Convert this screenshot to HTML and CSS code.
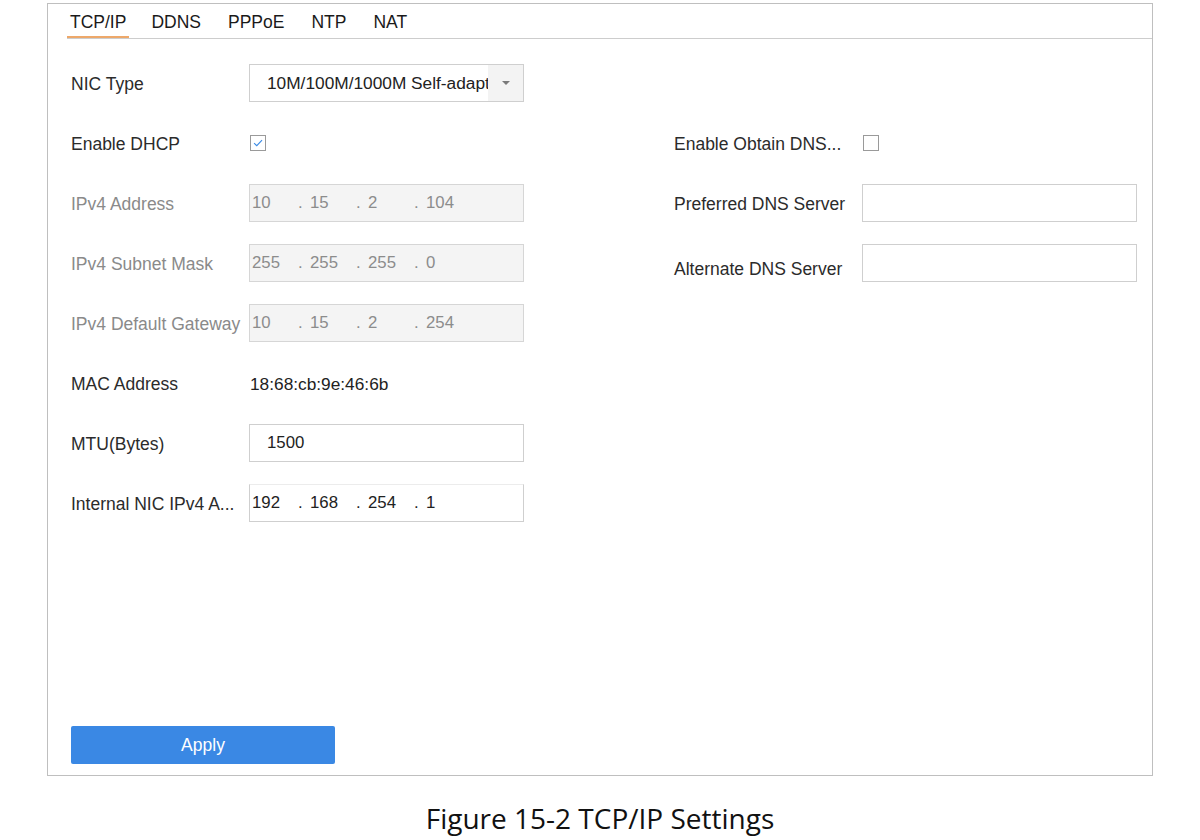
FILE: index.html
```html
<!DOCTYPE html>
<html lang="en">
<head>
<meta charset="utf-8">
<title>TCP/IP Settings</title>
<link rel="stylesheet" href="styles.css">
</head>
<body>
<div class="page">
  <div class="frame">
    <div class="tabs">
      <div class="tab active">TCP/IP</div>
      <div class="tab">DDNS</div>
      <div class="tab">PPPoE</div>
      <div class="tab">NTP</div>
      <div class="tab">NAT</div>
    </div>
    <div class="content">
      <div class="col col-left">
        <div class="row">
          <div class="label">NIC Type</div>
          <div class="select">
            <span class="select-text">10M/100M/1000M Self-adapt</span>
            <span class="select-arrow"><span class="tri"></span></span>
          </div>
        </div>
        <div class="row">
          <div class="label">Enable DHCP</div>
          <div class="checkbox checked">
            <svg viewBox="0 0 16 16" width="14" height="14"><path d="M3.5 8.2 L6.6 11 L12.6 4.6" fill="none" stroke="#3d8ce6" stroke-width="1.3"/></svg>
          </div>
        </div>
        <div class="row">
          <div class="label disabled">IPv4 Address</div>
          <div class="ip disabled">
            <span class="seg first">10</span>
            <span class="seg"><span class="dot">.</span>15</span>
            <span class="seg"><span class="dot">.</span>2</span>
            <span class="seg"><span class="dot">.</span>104</span>
          </div>
        </div>
        <div class="row">
          <div class="label disabled">IPv4 Subnet Mask</div>
          <div class="ip disabled">
            <span class="seg first">255</span>
            <span class="seg"><span class="dot">.</span>255</span>
            <span class="seg"><span class="dot">.</span>255</span>
            <span class="seg"><span class="dot">.</span>0</span>
          </div>
        </div>
        <div class="row">
          <div class="label disabled">IPv4 Default Gateway</div>
          <div class="ip disabled">
            <span class="seg first">10</span>
            <span class="seg"><span class="dot">.</span>15</span>
            <span class="seg"><span class="dot">.</span>2</span>
            <span class="seg"><span class="dot">.</span>254</span>
          </div>
        </div>
        <div class="row">
          <div class="label">MAC Address</div>
          <div class="value">18:68:cb:9e:46:6b</div>
        </div>
        <div class="row">
          <div class="label">MTU(Bytes)</div>
          <div class="input"><span class="input-text">1500</span></div>
        </div>
        <div class="row">
          <div class="label">Internal NIC IPv4 A...</div>
          <div class="ip plain">
            <span class="seg first">192</span>
            <span class="seg"><span class="dot">.</span>168</span>
            <span class="seg"><span class="dot">.</span>254</span>
            <span class="seg"><span class="dot">.</span>1</span>
          </div>
        </div>
      </div>
      <div class="col col-right">
        <div class="row">
          <div class="label label-right">Enable Obtain DNS...</div>
          <div class="checkbox"></div>
        </div>
        <div class="row">
          <div class="label label-right">Preferred DNS Server</div>
          <div class="input"></div>
        </div>
        <div class="row">
          <div class="label label-right label-low">Alternate DNS Server</div>
          <div class="input"></div>
        </div>
      </div>
    </div>
    <div class="actions">
      <button class="btn-apply" type="button">Apply</button>
    </div>
  </div>
  <div class="caption">Figure 15-2 TCP/IP Settings</div>
</div>
</body>
</html>
```

FILE: styles.css
```css
* { box-sizing: border-box; }
html, body { margin: 0; padding: 0; background: #ffffff; }
body {
  font-family: "Liberation Sans", Arial, sans-serif;
  color: #2b2b2b;
  width: 1200px;
  height: 840px;
  overflow: hidden;
}
.page {
  padding-top: 3px;
}
.frame {
  width: 1106px;
  height: 773px;
  margin-left: 47px;
  border: 1px solid #bfbfbf;
  display: flex;
  flex-direction: column;
}
.tabs {
  display: flex;
  margin-left: 19px;
  height: 35px;
  border-bottom: 1px solid #cdcdcd;
}
.tab {
  font-size: 17.5px;
  line-height: 20px;
  padding: 8px 3px 4px 3px;
  margin-right: 21px;
  height: 34px;
  color: #1a1a1a;
  border-bottom: 2px solid transparent;
}
.tab.active { border-bottom-color: #eda86a; margin-right: 19px; }
.content {
  display: flex;
  margin-top: 25px;
  padding-left: 23px;
}
.col { display: flex; flex-direction: column; gap: 22px; }
.col-left { width: 603px; }
.col-right { padding-top: 60px; }
.row {
  display: flex;
  align-items: center;
  height: 38px;
}
.label {
  width: 178px;
  font-size: 17.5px;
  white-space: nowrap;
  color: #2b2b2b;
  padding-top: 2px;
}
.label.disabled { color: #8a8a8a; }
.label-right { width: 188px; }
.label-low { padding-top: 13px; }
.select {
  width: 275px;
  height: 38px;
  border: 1px solid #cfcfcf;
  display: flex;
  align-items: stretch;
  background: #fff;
}
.select-text {
  flex: 1;
  min-width: 0;
  overflow: hidden;
  text-overflow: clip;
  white-space: nowrap;
  font-size: 17.3px;
  line-height: 36px;
  padding-left: 17px;
  color: #222;
}
.select-arrow {
  width: 35px;
  background: #f3f3f3;
  display: flex;
  align-items: center;
  justify-content: center;
}
.tri {
  width: 0; height: 0;
  border-left: 4px solid transparent;
  border-right: 4px solid transparent;
  border-top: 4px solid #7a7a7a;
}
.checkbox {
  width: 16px;
  height: 16px;
  margin-left: 1px;
  border: 1px solid #9a9a9a;
  background: #fff;
  display: flex;
  align-items: center;
  justify-content: center;
}
.ip, .input {
  width: 275px;
  height: 38px;
  border: 1px solid #cfcfcf;
  display: flex;
  align-items: center;
  font-size: 16.8px;
  white-space: nowrap;
}
.ip.disabled { background: #f4f4f4; color: #8c8c8c; border-color: #d6d6d6; }
.ip.plain { background: #fff; color: #222; border-top-color: #ececec; }
.seg { width: 58px; display: flex; }
.seg.first { width: 48px; padding-left: 2px; }
.dot { width: 12px; }
.input { background: #fff; color: #222; }
.input-text { padding-left: 17px; }
.value { font-size: 17.3px; color: #222; margin-left: 1px; padding-top: 2px; }
.actions {
  margin-top: auto;
  padding: 0 0 11px 23px;
}
.btn-apply {
  width: 264px;
  height: 38px;
  border: none;
  border-radius: 2px;
  background: #3a88e4;
  color: #ffffff;
  font-family: "Liberation Sans", Arial, sans-serif;
  font-size: 17.5px;
  padding: 0;
  display: block;
}
.caption {
  text-align: center;
  font-family: "Open Sans", "Noto Sans", sans-serif;
  font-size: 28px;
  color: #111;
  margin-top: 24px;
  line-height: 36px;
}
```
